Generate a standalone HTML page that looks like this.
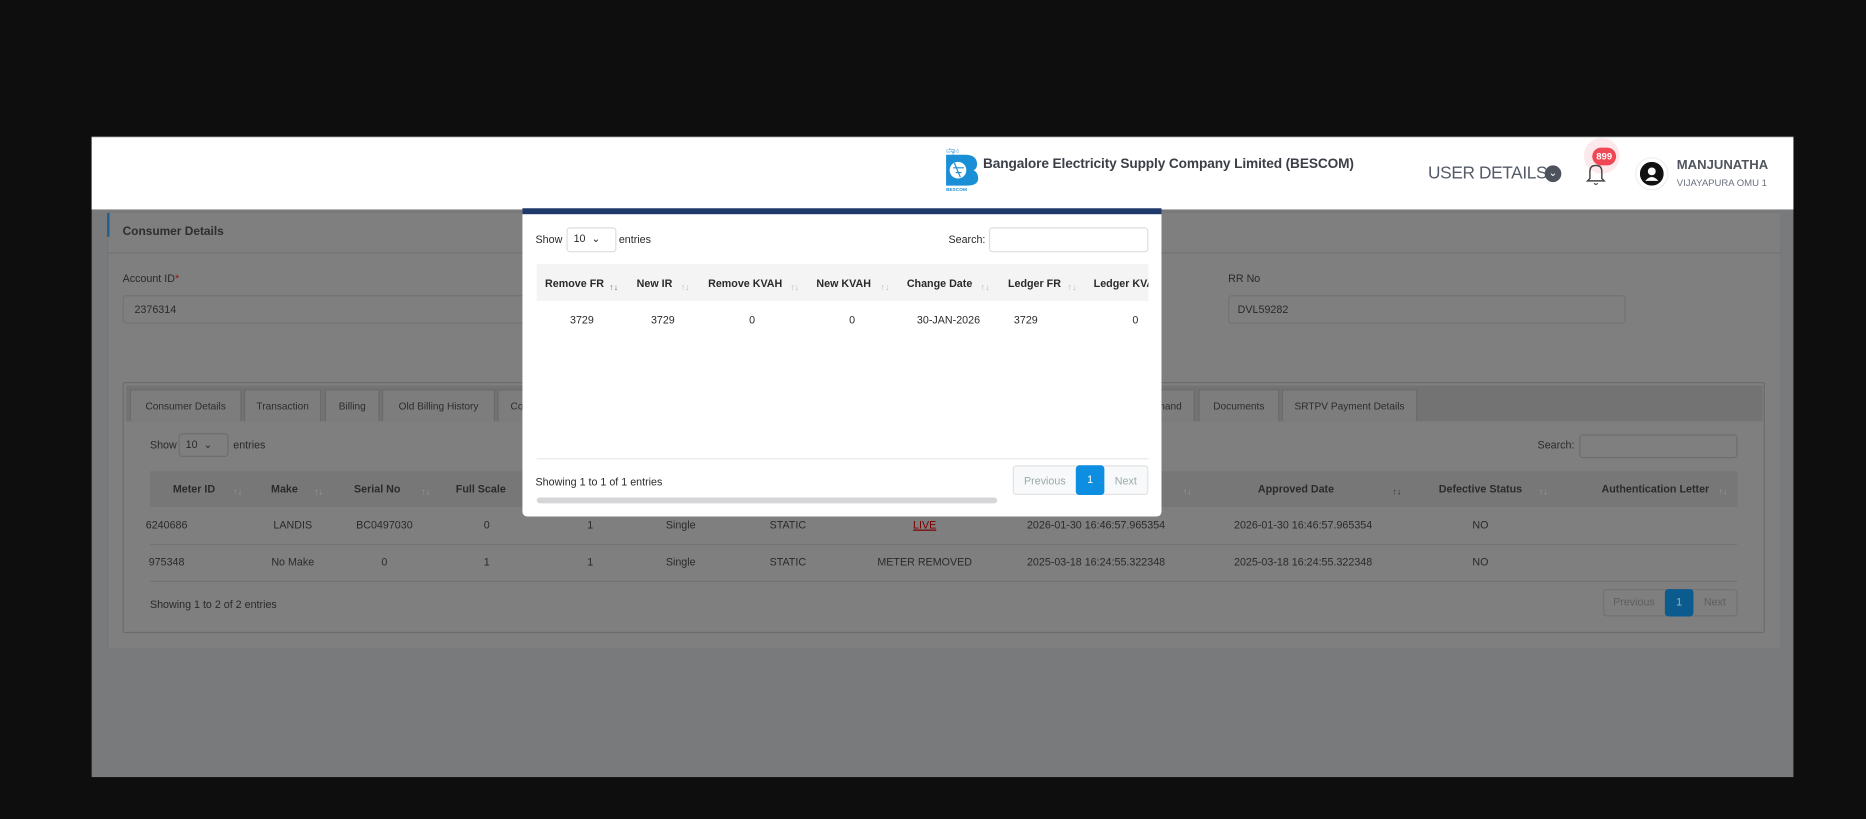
<!DOCTYPE html>
<html><head><meta charset="utf-8"><style>
*{margin:0;padding:0;box-sizing:border-box}
html,body{width:1866px;height:819px;overflow:hidden;background:#0e0e0e}
#w{position:absolute;left:0;top:0;width:1568px;height:688px;transform:scale(1.19005);transform-origin:0 0;font-family:"Liberation Sans",sans-serif;font-size:9px;color:#2a2a2a}
.a{position:absolute}
.c{position:absolute;transform:translate(-50%,-50%);white-space:nowrap}
.l{position:absolute;transform:translateY(-50%);white-space:nowrap}
.b{font-weight:bold}
.s{position:absolute;color:#9a9a9a;font-size:7.5px;transform:translateY(-50%)}
.tab{position:absolute;top:327px;height:27px;border:1px solid #6a6a6a;border-bottom:none;background:#7d7d7d;color:#2c2c2c;line-height:27px;text-align:center;font-size:8.5px}
</style></head><body><div id="w">
<div class="a" style="left:77px;top:115px;width:1430px;height:538px;background:#797a7c"></div>
<div class="a" style="left:77px;top:115px;width:1430px;height:61px;background:#fff;border-top:1px solid #ddd"></div>
<svg class="a" style="left:794px;top:123px" width="30" height="38" viewBox="0 0 30 38">
<text x="1" y="5" font-size="5" fill="#1a8fd6" font-family="Liberation Sans">ಬೆಸ್ಕಾಂ</text>
<path d="M1 7 H17 Q27 7 27 15 Q27 19 24 20 Q28 22 28 27 Q28 33 18 33 H1Z" fill="#1a8fd6"/>
<circle cx="11" cy="20" r="7" fill="#fff"/><path d="M8 14 L13 26 M7 18 H16 M9 22 H14" stroke="#1a8fd6" stroke-width="1"/>
<text x="1" y="37.5" font-size="4" fill="#1a8fd6" font-weight="bold" font-family="Liberation Sans">BESCOM</text>
</svg>
<div class="l b" style="left:826px;top:138px;font-size:11.5px;color:#3b3f47;letter-spacing:-0.1px">Bangalore Electricity Supply Company Limited (BESCOM)</div>
<div class="l" style="left:1200px;top:146px;font-size:14.5px;color:#555b66;letter-spacing:-0.3px">USER DETAILS</div>
<div class="a" style="left:1298px;top:139px;width:14px;height:14px;border-radius:50%;background:#4d525c;color:#fff;font-size:9px;text-align:center;line-height:12px">&#8964;</div>
<div class="a" style="left:1331px;top:116px;width:30px;height:30px;border-radius:50%;background:#fde8ec"></div>
<svg class="a" style="left:1332px;top:135px" width="18" height="22" viewBox="0 0 18 22"><path d="M4 15 V9 Q4 4 9 4 Q14 4 14 9 V15 L16 17 H2Z" fill="none" stroke="#444" stroke-width="1.2"/><path d="M7.5 19 Q9 21 10.5 19" stroke="#444" fill="none"/></svg>
<div class="a" style="left:1338px;top:124px;width:20px;height:15px;border-radius:8px;background:#ef4754;color:#fff;font-size:8px;font-weight:bold;text-align:center;line-height:15px">899</div>
<div class="a" style="left:1374px;top:132px;width:28px;height:28px;border-radius:50%;border:1px solid #eee"></div>
<svg class="a" style="left:1378px;top:136px" width="20" height="20" viewBox="0 0 20 20"><circle cx="10" cy="10" r="10" fill="#111"/><circle cx="10" cy="8" r="3.3" fill="#fff"/><path d="M4.5 16 Q10 9.5 15.5 16 Z" fill="#fff"/></svg>
<div class="l b" style="left:1409px;top:139px;font-size:11px;color:#50555e">MANJUNATHA</div>
<div class="l" style="left:1409px;top:154px;font-size:8px;color:#6a7080">VIJAYAPURA OMU 1</div>
<div class="a" style="left:90px;top:178px;width:1407px;height:368px;background:#7f7f7f;border:1px solid #777"></div>
<div class="a" style="left:90px;top:179px;width:2px;height:20px;background:#1f5f8f"></div>
<div class="l b" style="left:103px;top:195px;font-size:10px;color:#2e2e2e">Consumer Details</div>
<div class="a" style="left:90px;top:212px;width:1407px;height:1px;background:#747474"></div>
<div class="l" style="left:103px;top:234px">Account ID<span style="color:#8a1a1a">*</span></div>
<div class="a" style="left:103px;top:248px;width:340px;height:24px;border:1px solid #737373;border-radius:3px"></div>
<div class="l" style="left:113px;top:260px">2376314</div>
<div class="l" style="left:1032px;top:234px">RR No</div>
<div class="a" style="left:1032px;top:248px;width:334px;height:24px;border:1px solid #737373;border-radius:3px"></div>
<div class="l" style="left:1040px;top:260px">DVL59282</div>
<div class="a" style="left:103px;top:321px;width:1380px;height:211px;border:1px solid #6c6c6c;border-radius:2px"></div>
<div class="a" style="left:106px;top:324px;width:1375px;height:30px;background:#737373"></div>
<div class="tab" style="left:109px;width:94px">Consumer Details</div>
<div class="tab" style="left:205px;width:65px">Transaction</div>
<div class="tab" style="left:273px;width:46px">Billing</div>
<div class="tab" style="left:321px;width:95px">Old Billing History</div>
<div class="tab" style="left:418px;width:30px;text-align:left;padding-left:10px">Co</div>
<div class="tab" style="left:960px;width:44px;text-align:right;padding-right:10px">nand</div>
<div class="tab" style="left:1007px;width:68px">Documents</div>
<div class="tab" style="left:1077px;width:114px">SRTPV Payment Details</div>
<div class="l" style="left:126px;top:374px">Show</div>
<div class="a" style="left:150px;top:364px;width:42px;height:20px;border:1px solid #6e6e6e;border-radius:3px"></div>
<div class="l" style="left:156px;top:374px">10 &nbsp;&#8964;</div>
<div class="l" style="left:196px;top:374px">entries</div>
<div class="l" style="left:1292px;top:374px">Search:</div>
<div class="a" style="left:1327px;top:365px;width:133px;height:20px;border:1px solid #6e6e6e;border-radius:3px"></div>
<div class="a" style="left:126px;top:396px;width:1334px;height:30px;background:#777"></div>
<div class="c b" style="left:163px;top:411px">Meter ID</div><div class="s" style="left:196px;top:413px">↑↓</div>
<div class="c b" style="left:239px;top:411px">Make</div><div class="s" style="left:264px;top:413px">↑↓</div>
<div class="c b" style="left:317px;top:411px">Serial No</div><div class="s" style="left:354px;top:413px">↑↓</div>
<div class="c b" style="left:404px;top:411px">Full Scale</div>
<div class="s" style="left:994px;top:413px">↑↓</div>
<div class="c b" style="left:1089px;top:411px">Approved Date</div><div class="s" style="left:1170px;top:413px;color:#333">↑↓</div>
<div class="c b" style="left:1244px;top:411px">Defective Status</div><div class="s" style="left:1293px;top:413px">↑↓</div>
<div class="c b" style="left:1391px;top:411px">Authentication Letter</div><div class="s" style="left:1444px;top:413px">↑↓</div>
<div class="a" style="left:126px;top:457px;width:1334px;height:1px;background:#747474"></div>
<div class="a" style="left:126px;top:488px;width:1334px;height:1px;background:#747474"></div>
<div class="c" style="left:140px;top:441px">6240686</div><div class="c" style="left:246px;top:441px">LANDIS</div><div class="c" style="left:323px;top:441px">BC0497030</div><div class="c" style="left:409px;top:441px">0</div><div class="c" style="left:496px;top:441px">1</div><div class="c" style="left:572px;top:441px">Single</div><div class="c" style="left:662px;top:441px">STATIC</div><div class="c" style="left:777px;top:441px;color:#7a0000;text-decoration:underline">LIVE</div><div class="c" style="left:921px;top:441px">2026-01-30 16:46:57.965354</div><div class="c" style="left:1095px;top:441px">2026-01-30 16:46:57.965354</div><div class="c" style="left:1244px;top:441px">NO</div>
<div class="c" style="left:140px;top:472px">975348</div><div class="c" style="left:246px;top:472px">No Make</div><div class="c" style="left:323px;top:472px">0</div><div class="c" style="left:409px;top:472px">1</div><div class="c" style="left:496px;top:472px">1</div><div class="c" style="left:572px;top:472px">Single</div><div class="c" style="left:662px;top:472px">STATIC</div><div class="c" style="left:777px;top:472px">METER REMOVED</div><div class="c" style="left:921px;top:472px">2025-03-18 16:24:55.322348</div><div class="c" style="left:1095px;top:472px">2025-03-18 16:24:55.322348</div><div class="c" style="left:1244px;top:472px">NO</div>
<div class="l" style="left:126px;top:508px">Showing 1 to 2 of 2 entries</div>
<div class="a" style="left:1347px;top:495px;width:113px;height:23px;border:1px solid #727272;border-radius:3px"></div>
<div class="c" style="left:1373px;top:506px;color:#5e5e5e">Previous</div>
<div class="a" style="left:1399px;top:495px;width:24px;height:23px;background:#0b5b8f;border-radius:3px;color:#9bb;text-align:center;line-height:23px">1</div>
<div class="c" style="left:1441px;top:506px;color:#5e5e5e">Next</div>
<div class="a" style="left:439px;top:176px;width:537px;height:258px;background:#fff;border-radius:0 0 4px 4px"></div>
<div class="a" style="left:439px;top:175px;width:537px;height:5px;background:#1e3a6a"></div>
<div class="l" style="left:450px;top:201px">Show</div>
<div class="a" style="left:476px;top:191px;width:42px;height:21px;border:1px solid #ddd;border-radius:3px"></div>
<div class="l" style="left:482px;top:201px">10 &nbsp;&#8964;</div>
<div class="l" style="left:520px;top:201px">entries</div>
<div class="l" style="left:797px;top:201px">Search:</div>
<div class="a" style="left:831px;top:191px;width:134px;height:21px;border:1px solid #ddd;border-radius:3px"></div>
<div class="a" style="left:451px;top:222px;width:514px;height:31px;background:#f4f4f5"></div>
<div class="l b" style="left:458px;top:238px">Remove FR</div><div class="s" style="left:512px;top:241px;color:#777">↑↓</div>
<div class="l b" style="left:535px;top:238px">New IR</div><div class="s" style="left:572px;top:241px;color:#bbb">↑↓</div>
<div class="l b" style="left:595px;top:238px">Remove KVAH</div><div class="s" style="left:664px;top:241px;color:#bbb">↑↓</div>
<div class="l b" style="left:686px;top:238px">New KVAH</div><div class="s" style="left:740px;top:241px;color:#bbb">↑↓</div>
<div class="l b" style="left:762px;top:238px">Change Date</div><div class="s" style="left:824px;top:241px;color:#bbb">↑↓</div>
<div class="l b" style="left:847px;top:238px">Ledger FR</div><div class="s" style="left:897px;top:241px;color:#bbb">↑↓</div>
<div class="a" style="left:919px;top:228px;width:46px;height:20px;overflow:hidden"><div class="l b" style="left:0;top:10px">Ledger KVAH</div></div>
<div class="c" style="left:489px;top:269px">3729</div><div class="c" style="left:557px;top:269px">3729</div><div class="c" style="left:632px;top:269px">0</div><div class="c" style="left:716px;top:269px">0</div><div class="c" style="left:797px;top:269px">30-JAN-2026</div><div class="c" style="left:862px;top:269px">3729</div><div class="c" style="left:954px;top:269px">0</div>
<div class="a" style="left:451px;top:385px;width:514px;height:1px;background:#e8e8e8"></div>
<div class="l" style="left:450px;top:405px">Showing 1 to 1 of 1 entries</div>
<div class="a" style="left:451px;top:418px;width:387px;height:5px;background:#d6d6d8;border-radius:3px"></div>
<div class="a" style="left:851px;top:391px;width:114px;height:25px;border:1px solid #e2e2e2;border-radius:3px;background:#f8f9fa"></div>
<div class="c" style="left:878px;top:404px;color:#9aa">Previous</div>
<div class="a" style="left:904px;top:391px;width:24px;height:25px;background:#0d8ee0;border-radius:3px;color:#fff;text-align:center;line-height:25px">1</div>
<div class="c" style="left:946px;top:404px;color:#9aa">Next</div>
</div></body></html>
